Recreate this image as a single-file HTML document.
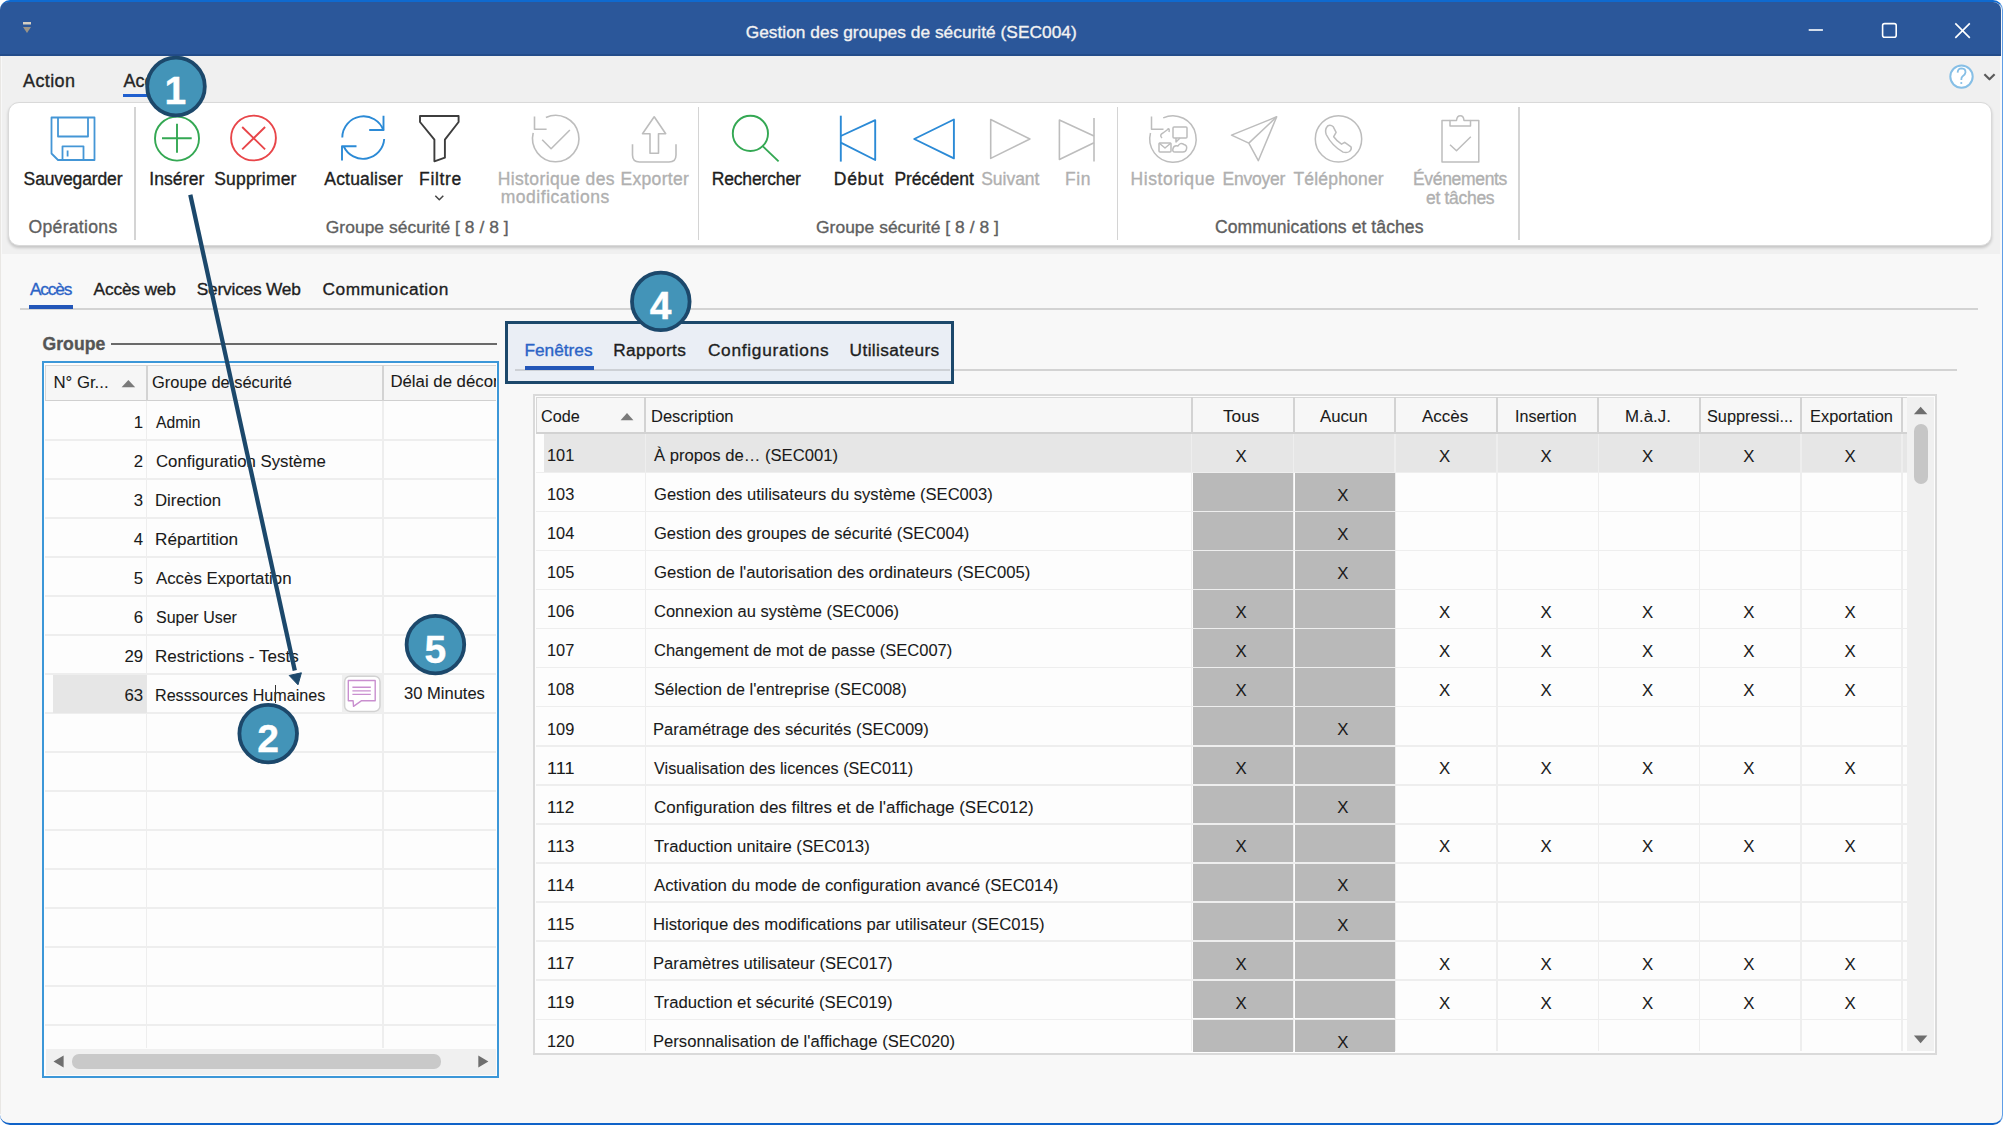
<!DOCTYPE html><html><head><meta charset="utf-8"><style>
html,body{margin:0;padding:0;width:2003px;height:1125px;overflow:hidden;background:#ffffff;}
body{font-family:'Liberation Sans', sans-serif;}
.t,.g{position:absolute;white-space:nowrap;line-height:1;}
.t{-webkit-text-stroke:0.35px currentColor;}
.g{-webkit-text-stroke:0.08px currentColor;}
.r{position:absolute;}
svg{position:absolute;left:0;top:0;}
</style></head><body>
<div class="r" style="left:0;top:0;width:2003px;height:1125px;background:#f8f8f8;border-top:2px solid #0f6ad0;border-right:1.5px solid #5f9ee6;border-bottom:2.6px solid #0f62c8;border-radius:10px;box-sizing:border-box;"></div>
<div class="r" style="left:0px;top:56px;width:1.3px;height:1058px;background:#e9e7e4;"></div>
<div class="r" style="left:0;top:2px;width:2001px;height:54px;background:#2b579a;border-radius:8px 8px 0 0;"></div>
<div class="r" style="left:0px;top:54px;width:2001px;height:2px;background:#234c8a;"></div>
<div class="t" style="left:745.70px;top:23.80px;font-size:17.3px;color:#f2f2f2;letter-spacing:0.040px;">Gestion des groupes de sécurité (SEC004)</div>
<div class="r" style="left:2px;top:56px;width:1998px;height:198px;background:#f0f0f0;"></div>
<div class="t" style="left:23.00px;top:72.00px;font-size:18px;color:#262626;letter-spacing:0.397px;">Action</div>
<div class="t" style="left:123.50px;top:72.00px;font-size:18px;color:#262626;">Accueil</div>
<div class="r" style="left:123px;top:94px;width:62px;height:3px;background:#1f5fcf;"></div>
<div class="r" style="left:8px;top:102px;width:1984px;height:144px;background:#ffffff;border:1px solid #d9d9d9;border-radius:11px;box-sizing:border-box;box-shadow:0 2px 3px rgba(0,0,0,0.18);"></div>
<div class="r" style="left:134.25px;top:107px;width:1.5px;height:133px;background:#d4d4d4;"></div>
<div class="r" style="left:697.95px;top:107px;width:1.5px;height:133px;background:#d4d4d4;"></div>
<div class="r" style="left:1116.75px;top:107px;width:1.5px;height:133px;background:#d4d4d4;"></div>
<div class="r" style="left:1518.05px;top:107px;width:1.5px;height:133px;background:#d4d4d4;"></div>
<div class="t" style="left:28.50px;top:219.14px;font-size:17.6px;color:#5f5f5f;letter-spacing:0.293px;">Opérations</div>
<div class="t" style="left:325.80px;top:219.31px;font-size:17.4px;color:#5f5f5f;letter-spacing:0.046px;">Groupe sécurité [ 8 / 8 ]</div>
<div class="t" style="left:816.00px;top:219.31px;font-size:17.4px;color:#5f5f5f;letter-spacing:0.046px;">Groupe sécurité [ 8 / 8 ]</div>
<div class="t" style="left:1214.90px;top:219.14px;font-size:17.6px;color:#5f5f5f;letter-spacing:0.056px;">Communications et tâches</div>
<div class="t" style="left:23.60px;top:170.53px;font-size:17.5px;color:#1e1e1e;letter-spacing:-0.128px;">Sauvegarder</div>
<div class="t" style="left:149.20px;top:170.53px;font-size:17.5px;color:#1e1e1e;letter-spacing:0.110px;">Insérer</div>
<div class="t" style="left:214.20px;top:170.53px;font-size:17.5px;color:#1e1e1e;letter-spacing:0.188px;">Supprimer</div>
<div class="t" style="left:324.30px;top:170.53px;font-size:17.5px;color:#1e1e1e;letter-spacing:0.188px;">Actualiser</div>
<div class="t" style="left:419.00px;top:170.53px;font-size:17.5px;color:#1e1e1e;letter-spacing:0.689px;">Filtre</div>
<div class="t" style="left:497.70px;top:170.53px;font-size:17.5px;color:#b0b0b0;letter-spacing:0.384px;">Historique des</div>
<div class="t" style="left:620.50px;top:170.53px;font-size:17.5px;color:#b0b0b0;letter-spacing:0.313px;">Exporter</div>
<div class="t" style="left:711.70px;top:170.53px;font-size:17.5px;color:#1e1e1e;letter-spacing:-0.148px;">Rechercher</div>
<div class="t" style="left:833.80px;top:170.53px;font-size:17.5px;color:#1e1e1e;letter-spacing:0.716px;">Début</div>
<div class="t" style="left:894.40px;top:170.53px;font-size:17.5px;color:#1e1e1e;letter-spacing:-0.039px;">Précédent</div>
<div class="t" style="left:981.20px;top:170.53px;font-size:17.5px;color:#b0b0b0;letter-spacing:-0.018px;">Suivant</div>
<div class="t" style="left:1064.90px;top:170.53px;font-size:17.5px;color:#b0b0b0;letter-spacing:0.661px;">Fin</div>
<div class="t" style="left:1130.40px;top:170.53px;font-size:17.5px;color:#b0b0b0;letter-spacing:0.628px;">Historique</div>
<div class="t" style="left:1222.50px;top:170.53px;font-size:17.5px;color:#b0b0b0;letter-spacing:-0.228px;">Envoyer</div>
<div class="t" style="left:1293.50px;top:170.53px;font-size:17.5px;color:#b0b0b0;letter-spacing:0.177px;">Téléphoner</div>
<div class="t" style="left:1413.00px;top:170.53px;font-size:17.5px;color:#b0b0b0;letter-spacing:-0.325px;">Événements</div>
<div class="t" style="left:500.70px;top:189.23px;font-size:17.5px;color:#b0b0b0;letter-spacing:0.535px;">modifications</div>
<div class="t" style="left:1426.00px;top:189.73px;font-size:17.5px;color:#b0b0b0;letter-spacing:-0.308px;">et tâches</div>
<div class="t" style="left:29.90px;top:281.40px;font-size:17.3px;color:#2b63c6;letter-spacing:-1.130px;">Accès</div>
<div class="t" style="left:93.60px;top:281.40px;font-size:17.3px;color:#1e1e1e;letter-spacing:-0.169px;">Accès web</div>
<div class="t" style="left:196.80px;top:281.40px;font-size:17.3px;color:#1e1e1e;letter-spacing:-0.207px;">Services Web</div>
<div class="t" style="left:322.60px;top:281.40px;font-size:17.3px;color:#1e1e1e;letter-spacing:0.471px;">Communication</div>
<div class="r" style="left:20px;top:307.5px;width:1957.8px;height:2px;background:#d3d3d3;"></div>
<div class="r" style="left:29.4px;top:305px;width:44px;height:4px;background:#2356b8;"></div>
<div class="t" style="left:42.40px;top:336.04px;font-size:17.6px;color:#555555;font-weight:bold;letter-spacing:0.085px;">Groupe</div>
<div class="r" style="left:111px;top:343.3px;width:386px;height:2px;background:#6a6a6a;"></div>
<div class="r" style="left:42px;top:361px;width:457px;height:717px;border:2px solid #3c97d8;box-sizing:border-box;background:#fdfdfd;"></div>
<div class="r" style="left:45px;top:365px;width:451px;height:36px;background:#f6f6f6;border:1px solid #d6d6d6;border-right:none;box-sizing:border-box;"></div>
<div class="r" style="left:45px;top:399.5px;width:451px;height:1.5px;background:#d0d0d0;"></div>
<div class="r" style="left:145.5px;top:365px;width:2px;height:36px;background:#d3d3d3;"></div>
<div class="r" style="left:381.5px;top:365px;width:2px;height:36px;background:#d3d3d3;"></div>
<div class="g" style="left:53.40px;top:375.22px;font-size:16.8px;color:#1a1a1a;">N° Gr...</div>
<div class="g" style="left:152.30px;top:375.22px;font-size:16.8px;color:#1a1a1a;transform:scaleX(0.9797);transform-origin:0 0;">Groupe de sécurité</div>
<div class="r" style="left:384px;top:365px;width:112px;height:34px;overflow:hidden;">
<div class="g" style="left:6.4px;top:8.7px;font-size:16.8px;color:#1a1a1a;">Délai de déconnexion</div>
</div>
<div class="r" style="left:45px;top:439px;width:451px;height:1.5px;background:#eeeeee;"></div>
<div class="r" style="left:45px;top:478px;width:451px;height:1.5px;background:#eeeeee;"></div>
<div class="r" style="left:45px;top:517px;width:451px;height:1.5px;background:#eeeeee;"></div>
<div class="r" style="left:45px;top:556px;width:451px;height:1.5px;background:#eeeeee;"></div>
<div class="r" style="left:45px;top:595px;width:451px;height:1.5px;background:#eeeeee;"></div>
<div class="r" style="left:45px;top:634px;width:451px;height:1.5px;background:#eeeeee;"></div>
<div class="r" style="left:45px;top:673px;width:451px;height:1.5px;background:#eeeeee;"></div>
<div class="r" style="left:45px;top:712px;width:451px;height:1.5px;background:#eeeeee;"></div>
<div class="r" style="left:45px;top:751px;width:451px;height:1.5px;background:#eeeeee;"></div>
<div class="r" style="left:45px;top:790px;width:451px;height:1.5px;background:#eeeeee;"></div>
<div class="r" style="left:45px;top:829px;width:451px;height:1.5px;background:#eeeeee;"></div>
<div class="r" style="left:45px;top:868px;width:451px;height:1.5px;background:#eeeeee;"></div>
<div class="r" style="left:45px;top:907px;width:451px;height:1.5px;background:#eeeeee;"></div>
<div class="r" style="left:45px;top:946px;width:451px;height:1.5px;background:#eeeeee;"></div>
<div class="r" style="left:45px;top:985px;width:451px;height:1.5px;background:#eeeeee;"></div>
<div class="r" style="left:45px;top:1024px;width:451px;height:1.5px;background:#eeeeee;"></div>
<div class="r" style="left:145.8px;top:401px;width:1.5px;height:647px;background:#eeeeee;"></div>
<div class="r" style="left:382.3px;top:401px;width:1.5px;height:647px;background:#eeeeee;"></div>
<div class="r" style="left:53px;top:675px;width:93.5px;height:37.5px;background:#e6e6e6;"></div>
<div class="r" style="left:342px;top:674.5px;width:40px;height:38px;background:#efefef;"></div>
<div class="g" style="left:133.80px;top:414.92px;font-size:16.8px;color:#1a1a1a;">1</div>
<div class="g" style="left:155.60px;top:414.92px;font-size:16.8px;color:#1a1a1a;transform:scaleX(0.9358);transform-origin:0 0;">Admin</div>
<div class="g" style="left:133.80px;top:453.92px;font-size:16.8px;color:#1a1a1a;">2</div>
<div class="g" style="left:155.60px;top:453.92px;font-size:16.8px;color:#1a1a1a;transform:scaleX(0.9998);transform-origin:0 0;">Configuration Système</div>
<div class="g" style="left:133.80px;top:492.92px;font-size:16.8px;color:#1a1a1a;">3</div>
<div class="g" style="left:154.60px;top:492.92px;font-size:16.8px;color:#1a1a1a;transform:scaleX(0.9987);transform-origin:0 0;">Direction</div>
<div class="g" style="left:133.80px;top:531.92px;font-size:16.8px;color:#1a1a1a;">4</div>
<div class="g" style="left:154.58px;top:531.92px;font-size:16.8px;color:#1a1a1a;transform:scaleX(1.0248);transform-origin:0 0;">Répartition</div>
<div class="g" style="left:133.80px;top:570.92px;font-size:16.8px;color:#1a1a1a;">5</div>
<div class="g" style="left:155.60px;top:570.92px;font-size:16.8px;color:#1a1a1a;transform:scaleX(1.0021);transform-origin:0 0;">Accès Exportation</div>
<div class="g" style="left:133.80px;top:609.92px;font-size:16.8px;color:#1a1a1a;">6</div>
<div class="g" style="left:155.60px;top:609.92px;font-size:16.8px;color:#1a1a1a;transform:scaleX(0.9533);transform-origin:0 0;">Super User</div>
<div class="g" style="left:124.47px;top:648.92px;font-size:16.8px;color:#1a1a1a;">29</div>
<div class="g" style="left:154.58px;top:648.92px;font-size:16.8px;color:#1a1a1a;transform:scaleX(1.0160);transform-origin:0 0;">Restrictions - Tests</div>
<div class="g" style="left:124.47px;top:687.92px;font-size:16.8px;color:#1a1a1a;">63</div>
<div class="g" style="left:154.64px;top:687.92px;font-size:16.8px;color:#1a1a1a;transform:scaleX(0.9607);transform-origin:0 0;">Resssources Humaines</div>
<div class="g" style="left:403.70px;top:686.32px;font-size:16.8px;color:#1a1a1a;transform:scaleX(0.9854);transform-origin:0 0;">30 Minutes</div>
<div class="r" style="left:275px;top:685px;width:1.2px;height:18px;background:#333;"></div>
<div class="r" style="left:46px;top:1048.5px;width:450px;height:26px;background:#f0f0f0;"></div>
<div class="r" style="left:71.7px;top:1054.3px;width:369px;height:14.5px;background:#c9c9c9;border-radius:7px;"></div>
<div class="r" style="left:515px;top:368.5px;width:1442px;height:2px;background:#d3d3d3;"></div>
<div class="r" style="left:505px;top:321px;width:449px;height:63px;border:3px solid #1c486b;box-sizing:border-box;background:#eaeef5;"></div>
<div class="r" style="left:515px;top:368.5px;width:435px;height:2px;background:#cdd0d5;"></div>
<div class="t" style="left:524.40px;top:342.30px;font-size:17.3px;color:#2b63c6;">Fenêtres</div>
<div class="t" style="left:613.20px;top:342.30px;font-size:17.3px;color:#1e1e1e;letter-spacing:0.360px;">Rapports</div>
<div class="t" style="left:707.90px;top:342.30px;font-size:17.3px;color:#1e1e1e;letter-spacing:0.716px;">Configurations</div>
<div class="t" style="left:849.60px;top:342.30px;font-size:17.3px;color:#1e1e1e;letter-spacing:0.379px;">Utilisateurs</div>
<div class="r" style="left:524.6px;top:365.5px;width:69px;height:4.3px;background:#2356b8;"></div>
<div class="r" style="left:532.5px;top:393.5px;width:1404px;height:661px;border:2px solid #dadada;box-sizing:border-box;background:#fdfdfd;"></div>
<div class="r" style="left:536px;top:397px;width:1371px;height:36.5px;background:#f7f7f7;border:1px solid #d8d8d8;border-right:none;box-sizing:border-box;"></div>
<div class="r" style="left:536px;top:432px;width:1371px;height:1.5px;background:#d2d2d2;"></div>
<div class="r" style="left:644.4px;top:397px;width:2px;height:36px;background:#d3d3d3;"></div>
<div class="r" style="left:1190.5px;top:397px;width:2px;height:36px;background:#d3d3d3;"></div>
<div class="r" style="left:1292.6px;top:397px;width:2px;height:36px;background:#d3d3d3;"></div>
<div class="r" style="left:1393.9px;top:397px;width:2px;height:36px;background:#d3d3d3;"></div>
<div class="r" style="left:1495.9px;top:397px;width:2px;height:36px;background:#d3d3d3;"></div>
<div class="r" style="left:1597.3px;top:397px;width:2px;height:36px;background:#d3d3d3;"></div>
<div class="r" style="left:1698.5px;top:397px;width:2px;height:36px;background:#d3d3d3;"></div>
<div class="r" style="left:1800px;top:397px;width:2px;height:36px;background:#d3d3d3;"></div>
<div class="r" style="left:1901px;top:397px;width:2px;height:36px;background:#d3d3d3;"></div>
<div class="g" style="left:541.40px;top:408.72px;font-size:16.8px;color:#1a1a1a;transform:scaleX(0.9652);transform-origin:0 0;">Code</div>
<div class="g" style="left:650.72px;top:408.72px;font-size:16.8px;color:#1a1a1a;transform:scaleX(0.9830);transform-origin:0 0;">Description</div>
<div class="g" style="left:1223.10px;top:408.72px;font-size:16.8px;color:#1a1a1a;transform:scaleX(1.0269);transform-origin:0 0;">Tous</div>
<div class="g" style="left:1319.80px;top:408.72px;font-size:16.8px;color:#1a1a1a;transform:scaleX(0.9968);transform-origin:0 0;">Aucun</div>
<div class="g" style="left:1421.60px;top:408.72px;font-size:16.8px;color:#1a1a1a;transform:scaleX(1.0109);transform-origin:0 0;">Accès</div>
<div class="g" style="left:1514.84px;top:408.72px;font-size:16.8px;color:#1a1a1a;transform:scaleX(0.9567);transform-origin:0 0;">Insertion</div>
<div class="g" style="left:1625.10px;top:408.72px;font-size:16.8px;color:#1a1a1a;transform:scaleX(1.0039);transform-origin:0 0;">M.à.J.</div>
<div class="g" style="left:1707.20px;top:408.72px;font-size:16.8px;color:#1a1a1a;transform:scaleX(0.9710);transform-origin:0 0;">Suppressi...</div>
<div class="g" style="left:1809.62px;top:408.72px;font-size:16.8px;color:#1a1a1a;transform:scaleX(0.9766);transform-origin:0 0;">Exportation</div>
<div class="r" style="left:534px;top:433.5px;width:1373px;height:618px;overflow:hidden;">
<div class="r" style="left:9.6px;top:0.0px;width:1363px;height:38.5px;background:#e6e6e6;"></div>
<div class="r" style="left:2px;top:38.07px;width:1371px;height:1.5px;background:#eeeeee;"></div>
<div class="r" style="left:2px;top:77.14px;width:1371px;height:1.5px;background:#eeeeee;"></div>
<div class="r" style="left:2px;top:116.21px;width:1371px;height:1.5px;background:#eeeeee;"></div>
<div class="r" style="left:2px;top:155.28px;width:1371px;height:1.5px;background:#eeeeee;"></div>
<div class="r" style="left:2px;top:194.35px;width:1371px;height:1.5px;background:#eeeeee;"></div>
<div class="r" style="left:2px;top:233.42px;width:1371px;height:1.5px;background:#eeeeee;"></div>
<div class="r" style="left:2px;top:272.49px;width:1371px;height:1.5px;background:#eeeeee;"></div>
<div class="r" style="left:2px;top:311.56px;width:1371px;height:1.5px;background:#eeeeee;"></div>
<div class="r" style="left:2px;top:350.63px;width:1371px;height:1.5px;background:#eeeeee;"></div>
<div class="r" style="left:2px;top:389.7px;width:1371px;height:1.5px;background:#eeeeee;"></div>
<div class="r" style="left:2px;top:428.77px;width:1371px;height:1.5px;background:#eeeeee;"></div>
<div class="r" style="left:2px;top:467.84px;width:1371px;height:1.5px;background:#eeeeee;"></div>
<div class="r" style="left:2px;top:506.91px;width:1371px;height:1.5px;background:#eeeeee;"></div>
<div class="r" style="left:2px;top:545.98px;width:1371px;height:1.5px;background:#eeeeee;"></div>
<div class="r" style="left:2px;top:585.05px;width:1371px;height:1.5px;background:#eeeeee;"></div>
<div class="r" style="left:110.65px;top:-0.5px;width:1.5px;height:618px;background:#eeeeee;"></div>
<div class="r" style="left:656.75px;top:-0.5px;width:1.5px;height:618px;background:#eeeeee;"></div>
<div class="r" style="left:758.85px;top:-0.5px;width:1.5px;height:618px;background:#eeeeee;"></div>
<div class="r" style="left:860.15px;top:-0.5px;width:1.5px;height:618px;background:#eeeeee;"></div>
<div class="r" style="left:962.15px;top:-0.5px;width:1.5px;height:618px;background:#eeeeee;"></div>
<div class="r" style="left:1063.55px;top:-0.5px;width:1.5px;height:618px;background:#eeeeee;"></div>
<div class="r" style="left:1164.75px;top:-0.5px;width:1.5px;height:618px;background:#eeeeee;"></div>
<div class="r" style="left:1266.25px;top:-0.5px;width:1.5px;height:618px;background:#eeeeee;"></div>
<div class="r" style="left:1367.25px;top:-0.5px;width:1.5px;height:618px;background:#eeeeee;"></div>
<div class="g" style="left:12.92px;top:14.52px;font-size:16.8px;color:#1a1a1a;transform:scaleX(0.9750);transform-origin:0 0;">101</div>
<div class="g" style="left:119.80px;top:14.52px;font-size:16.8px;color:#1a1a1a;transform:scaleX(0.9912);transform-origin:0 0;">À propos de… (SEC001)</div>
<div class="g" style="left:701.55px;top:15.22px;font-size:16.8px;color:#1a1a1a;">X</div>
<div class="g" style="left:904.90px;top:15.22px;font-size:16.8px;color:#1a1a1a;">X</div>
<div class="g" style="left:1006.60px;top:15.22px;font-size:16.8px;color:#1a1a1a;">X</div>
<div class="g" style="left:1107.90px;top:15.22px;font-size:16.8px;color:#1a1a1a;">X</div>
<div class="g" style="left:1209.25px;top:15.22px;font-size:16.8px;color:#1a1a1a;">X</div>
<div class="g" style="left:1310.50px;top:15.22px;font-size:16.8px;color:#1a1a1a;">X</div>
<div class="r" style="left:659.2px;top:39.57px;width:99.5px;height:37.5px;background:#b9b9b9;"></div>
<div class="r" style="left:761.2px;top:39.57px;width:99.7px;height:37.5px;background:#b9b9b9;"></div>
<div class="g" style="left:12.92px;top:53.59px;font-size:16.8px;color:#1a1a1a;transform:scaleX(0.9750);transform-origin:0 0;">103</div>
<div class="g" style="left:119.80px;top:53.59px;font-size:16.8px;color:#1a1a1a;transform:scaleX(0.9870);transform-origin:0 0;">Gestion des utilisateurs du système (SEC003)</div>
<div class="g" style="left:803.25px;top:54.29px;font-size:16.8px;color:#1a1a1a;">X</div>
<div class="r" style="left:659.2px;top:78.64px;width:99.5px;height:37.5px;background:#b9b9b9;"></div>
<div class="r" style="left:761.2px;top:78.64px;width:99.7px;height:37.5px;background:#b9b9b9;"></div>
<div class="g" style="left:12.92px;top:92.66px;font-size:16.8px;color:#1a1a1a;transform:scaleX(0.9750);transform-origin:0 0;">104</div>
<div class="g" style="left:119.80px;top:92.66px;font-size:16.8px;color:#1a1a1a;transform:scaleX(0.9857);transform-origin:0 0;">Gestion des groupes de sécurité (SEC004)</div>
<div class="g" style="left:803.25px;top:93.36px;font-size:16.8px;color:#1a1a1a;">X</div>
<div class="r" style="left:659.2px;top:117.71px;width:99.5px;height:37.5px;background:#b9b9b9;"></div>
<div class="r" style="left:761.2px;top:117.71px;width:99.7px;height:37.5px;background:#b9b9b9;"></div>
<div class="g" style="left:12.92px;top:131.73px;font-size:16.8px;color:#1a1a1a;transform:scaleX(0.9750);transform-origin:0 0;">105</div>
<div class="g" style="left:119.80px;top:131.73px;font-size:16.8px;color:#1a1a1a;transform:scaleX(0.9950);transform-origin:0 0;">Gestion de l&#x27;autorisation des ordinateurs (SEC005)</div>
<div class="g" style="left:803.25px;top:132.43px;font-size:16.8px;color:#1a1a1a;">X</div>
<div class="r" style="left:659.2px;top:156.78px;width:99.5px;height:37.5px;background:#b9b9b9;"></div>
<div class="r" style="left:761.2px;top:156.78px;width:99.7px;height:37.5px;background:#b9b9b9;"></div>
<div class="g" style="left:12.92px;top:170.80px;font-size:16.8px;color:#1a1a1a;transform:scaleX(0.9750);transform-origin:0 0;">106</div>
<div class="g" style="left:119.80px;top:170.80px;font-size:16.8px;color:#1a1a1a;transform:scaleX(0.9841);transform-origin:0 0;">Connexion au système (SEC006)</div>
<div class="g" style="left:701.55px;top:171.50px;font-size:16.8px;color:#1a1a1a;">X</div>
<div class="g" style="left:904.90px;top:171.50px;font-size:16.8px;color:#1a1a1a;">X</div>
<div class="g" style="left:1006.60px;top:171.50px;font-size:16.8px;color:#1a1a1a;">X</div>
<div class="g" style="left:1107.90px;top:171.50px;font-size:16.8px;color:#1a1a1a;">X</div>
<div class="g" style="left:1209.25px;top:171.50px;font-size:16.8px;color:#1a1a1a;">X</div>
<div class="g" style="left:1310.50px;top:171.50px;font-size:16.8px;color:#1a1a1a;">X</div>
<div class="r" style="left:659.2px;top:195.85px;width:99.5px;height:37.5px;background:#b9b9b9;"></div>
<div class="r" style="left:761.2px;top:195.85px;width:99.7px;height:37.5px;background:#b9b9b9;"></div>
<div class="g" style="left:12.92px;top:209.87px;font-size:16.8px;color:#1a1a1a;transform:scaleX(0.9750);transform-origin:0 0;">107</div>
<div class="g" style="left:119.80px;top:209.87px;font-size:16.8px;color:#1a1a1a;transform:scaleX(0.9839);transform-origin:0 0;">Changement de mot de passe (SEC007)</div>
<div class="g" style="left:701.55px;top:210.57px;font-size:16.8px;color:#1a1a1a;">X</div>
<div class="g" style="left:904.90px;top:210.57px;font-size:16.8px;color:#1a1a1a;">X</div>
<div class="g" style="left:1006.60px;top:210.57px;font-size:16.8px;color:#1a1a1a;">X</div>
<div class="g" style="left:1107.90px;top:210.57px;font-size:16.8px;color:#1a1a1a;">X</div>
<div class="g" style="left:1209.25px;top:210.57px;font-size:16.8px;color:#1a1a1a;">X</div>
<div class="g" style="left:1310.50px;top:210.57px;font-size:16.8px;color:#1a1a1a;">X</div>
<div class="r" style="left:659.2px;top:234.92px;width:99.5px;height:37.5px;background:#b9b9b9;"></div>
<div class="r" style="left:761.2px;top:234.92px;width:99.7px;height:37.5px;background:#b9b9b9;"></div>
<div class="g" style="left:12.92px;top:248.94px;font-size:16.8px;color:#1a1a1a;transform:scaleX(0.9750);transform-origin:0 0;">108</div>
<div class="g" style="left:119.80px;top:248.94px;font-size:16.8px;color:#1a1a1a;transform:scaleX(0.9839);transform-origin:0 0;">Sélection de l&#x27;entreprise (SEC008)</div>
<div class="g" style="left:701.55px;top:249.64px;font-size:16.8px;color:#1a1a1a;">X</div>
<div class="g" style="left:904.90px;top:249.64px;font-size:16.8px;color:#1a1a1a;">X</div>
<div class="g" style="left:1006.60px;top:249.64px;font-size:16.8px;color:#1a1a1a;">X</div>
<div class="g" style="left:1107.90px;top:249.64px;font-size:16.8px;color:#1a1a1a;">X</div>
<div class="g" style="left:1209.25px;top:249.64px;font-size:16.8px;color:#1a1a1a;">X</div>
<div class="g" style="left:1310.50px;top:249.64px;font-size:16.8px;color:#1a1a1a;">X</div>
<div class="r" style="left:659.2px;top:273.99px;width:99.5px;height:37.5px;background:#b9b9b9;"></div>
<div class="r" style="left:761.2px;top:273.99px;width:99.7px;height:37.5px;background:#b9b9b9;"></div>
<div class="g" style="left:12.92px;top:288.01px;font-size:16.8px;color:#1a1a1a;transform:scaleX(0.9750);transform-origin:0 0;">109</div>
<div class="g" style="left:118.81px;top:288.01px;font-size:16.8px;color:#1a1a1a;transform:scaleX(0.9892);transform-origin:0 0;">Paramétrage des sécurités (SEC009)</div>
<div class="g" style="left:803.25px;top:288.71px;font-size:16.8px;color:#1a1a1a;">X</div>
<div class="r" style="left:659.2px;top:313.06px;width:99.5px;height:37.5px;background:#b9b9b9;"></div>
<div class="r" style="left:761.2px;top:313.06px;width:99.7px;height:37.5px;background:#b9b9b9;"></div>
<div class="g" style="left:12.82px;top:327.08px;font-size:16.8px;color:#1a1a1a;transform:scaleX(1.0756);transform-origin:0 0;">111</div>
<div class="g" style="left:119.80px;top:327.08px;font-size:16.8px;color:#1a1a1a;transform:scaleX(0.9670);transform-origin:0 0;">Visualisation des licences (SEC011)</div>
<div class="g" style="left:701.55px;top:327.78px;font-size:16.8px;color:#1a1a1a;">X</div>
<div class="g" style="left:904.90px;top:327.78px;font-size:16.8px;color:#1a1a1a;">X</div>
<div class="g" style="left:1006.60px;top:327.78px;font-size:16.8px;color:#1a1a1a;">X</div>
<div class="g" style="left:1107.90px;top:327.78px;font-size:16.8px;color:#1a1a1a;">X</div>
<div class="g" style="left:1209.25px;top:327.78px;font-size:16.8px;color:#1a1a1a;">X</div>
<div class="g" style="left:1310.50px;top:327.78px;font-size:16.8px;color:#1a1a1a;">X</div>
<div class="r" style="left:659.2px;top:352.13px;width:99.5px;height:37.5px;background:#b9b9b9;"></div>
<div class="r" style="left:761.2px;top:352.13px;width:99.7px;height:37.5px;background:#b9b9b9;"></div>
<div class="g" style="left:12.88px;top:366.15px;font-size:16.8px;color:#1a1a1a;transform:scaleX(1.0228);transform-origin:0 0;">112</div>
<div class="g" style="left:119.80px;top:366.15px;font-size:16.8px;color:#1a1a1a;transform:scaleX(1.0095);transform-origin:0 0;">Configuration des filtres et de l&#x27;affichage (SEC012)</div>
<div class="g" style="left:803.25px;top:366.85px;font-size:16.8px;color:#1a1a1a;">X</div>
<div class="r" style="left:659.2px;top:391.2px;width:99.5px;height:37.5px;background:#b9b9b9;"></div>
<div class="r" style="left:761.2px;top:391.2px;width:99.7px;height:37.5px;background:#b9b9b9;"></div>
<div class="g" style="left:12.88px;top:405.22px;font-size:16.8px;color:#1a1a1a;transform:scaleX(1.0228);transform-origin:0 0;">113</div>
<div class="g" style="left:119.80px;top:405.22px;font-size:16.8px;color:#1a1a1a;transform:scaleX(0.9953);transform-origin:0 0;">Traduction unitaire (SEC013)</div>
<div class="g" style="left:701.55px;top:405.92px;font-size:16.8px;color:#1a1a1a;">X</div>
<div class="g" style="left:904.90px;top:405.92px;font-size:16.8px;color:#1a1a1a;">X</div>
<div class="g" style="left:1006.60px;top:405.92px;font-size:16.8px;color:#1a1a1a;">X</div>
<div class="g" style="left:1107.90px;top:405.92px;font-size:16.8px;color:#1a1a1a;">X</div>
<div class="g" style="left:1209.25px;top:405.92px;font-size:16.8px;color:#1a1a1a;">X</div>
<div class="g" style="left:1310.50px;top:405.92px;font-size:16.8px;color:#1a1a1a;">X</div>
<div class="r" style="left:659.2px;top:430.27px;width:99.5px;height:37.5px;background:#b9b9b9;"></div>
<div class="r" style="left:761.2px;top:430.27px;width:99.7px;height:37.5px;background:#b9b9b9;"></div>
<div class="g" style="left:12.88px;top:444.29px;font-size:16.8px;color:#1a1a1a;transform:scaleX(1.0228);transform-origin:0 0;">114</div>
<div class="g" style="left:119.80px;top:444.29px;font-size:16.8px;color:#1a1a1a;transform:scaleX(1.0012);transform-origin:0 0;">Activation du mode de configuration avancé (SEC014)</div>
<div class="g" style="left:803.25px;top:444.99px;font-size:16.8px;color:#1a1a1a;">X</div>
<div class="r" style="left:659.2px;top:469.34px;width:99.5px;height:37.5px;background:#b9b9b9;"></div>
<div class="r" style="left:761.2px;top:469.34px;width:99.7px;height:37.5px;background:#b9b9b9;"></div>
<div class="g" style="left:12.88px;top:483.36px;font-size:16.8px;color:#1a1a1a;transform:scaleX(1.0228);transform-origin:0 0;">115</div>
<div class="g" style="left:118.81px;top:483.36px;font-size:16.8px;color:#1a1a1a;transform:scaleX(0.9949);transform-origin:0 0;">Historique des modifications par utilisateur (SEC015)</div>
<div class="g" style="left:803.25px;top:484.06px;font-size:16.8px;color:#1a1a1a;">X</div>
<div class="r" style="left:659.2px;top:508.41px;width:99.5px;height:37.5px;background:#b9b9b9;"></div>
<div class="r" style="left:761.2px;top:508.41px;width:99.7px;height:37.5px;background:#b9b9b9;"></div>
<div class="g" style="left:12.88px;top:522.43px;font-size:16.8px;color:#1a1a1a;transform:scaleX(1.0228);transform-origin:0 0;">117</div>
<div class="g" style="left:118.81px;top:522.43px;font-size:16.8px;color:#1a1a1a;transform:scaleX(0.9914);transform-origin:0 0;">Paramètres utilisateur (SEC017)</div>
<div class="g" style="left:701.55px;top:523.13px;font-size:16.8px;color:#1a1a1a;">X</div>
<div class="g" style="left:904.90px;top:523.13px;font-size:16.8px;color:#1a1a1a;">X</div>
<div class="g" style="left:1006.60px;top:523.13px;font-size:16.8px;color:#1a1a1a;">X</div>
<div class="g" style="left:1107.90px;top:523.13px;font-size:16.8px;color:#1a1a1a;">X</div>
<div class="g" style="left:1209.25px;top:523.13px;font-size:16.8px;color:#1a1a1a;">X</div>
<div class="g" style="left:1310.50px;top:523.13px;font-size:16.8px;color:#1a1a1a;">X</div>
<div class="r" style="left:659.2px;top:547.48px;width:99.5px;height:37.5px;background:#b9b9b9;"></div>
<div class="r" style="left:761.2px;top:547.48px;width:99.7px;height:37.5px;background:#b9b9b9;"></div>
<div class="g" style="left:12.88px;top:561.50px;font-size:16.8px;color:#1a1a1a;transform:scaleX(1.0228);transform-origin:0 0;">119</div>
<div class="g" style="left:119.80px;top:561.50px;font-size:16.8px;color:#1a1a1a;transform:scaleX(0.9975);transform-origin:0 0;">Traduction et sécurité (SEC019)</div>
<div class="g" style="left:701.55px;top:562.20px;font-size:16.8px;color:#1a1a1a;">X</div>
<div class="g" style="left:904.90px;top:562.20px;font-size:16.8px;color:#1a1a1a;">X</div>
<div class="g" style="left:1006.60px;top:562.20px;font-size:16.8px;color:#1a1a1a;">X</div>
<div class="g" style="left:1107.90px;top:562.20px;font-size:16.8px;color:#1a1a1a;">X</div>
<div class="g" style="left:1209.25px;top:562.20px;font-size:16.8px;color:#1a1a1a;">X</div>
<div class="g" style="left:1310.50px;top:562.20px;font-size:16.8px;color:#1a1a1a;">X</div>
<div class="r" style="left:659.2px;top:586.55px;width:99.5px;height:37.5px;background:#b9b9b9;"></div>
<div class="r" style="left:761.2px;top:586.55px;width:99.7px;height:37.5px;background:#b9b9b9;"></div>
<div class="g" style="left:12.92px;top:600.57px;font-size:16.8px;color:#1a1a1a;transform:scaleX(0.9750);transform-origin:0 0;">120</div>
<div class="g" style="left:118.81px;top:600.57px;font-size:16.8px;color:#1a1a1a;transform:scaleX(0.9899);transform-origin:0 0;">Personnalisation de l&#x27;affichage (SEC020)</div>
<div class="g" style="left:803.25px;top:601.27px;font-size:16.8px;color:#1a1a1a;">X</div>
</div>
<div class="r" style="left:1907px;top:397px;width:27px;height:654px;background:#f0f0f0;"></div>
<div class="r" style="left:1913.5px;top:423.6px;width:14px;height:60.2px;background:#c6c6c6;border-radius:7px;"></div>
<svg width="2003" height="1125" viewBox="0 0 2003 1125" fill="none" stroke-linejoin="round">
<rect x="23" y="22" width="8" height="2.5" fill="#d6cfc2"/><path d="M23 27 L31 27 L27 33 Z" fill="#9a9488"/>
<g stroke="#ffffff" stroke-width="1.6"><path d="M1808.7 30 H1822.9"/><rect x="1882.6" y="23.6" width="13.6" height="13.6" rx="2"/><path d="M1955.3 23.4 L1969.8 37.9 M1969.8 23.4 L1955.3 37.9"/></g>
<circle cx="1961.5" cy="76.6" r="11.2" fill="#ffffff" stroke="#86bfe6" stroke-width="2"/>
<path d="M1957.6 72.6 Q1957.8 68.3 1961.7 68.3 Q1965.6 68.5 1965.5 72.3 Q1965.3 74.6 1962.4 76.5 Q1961.3 77.3 1961.3 80" stroke="#86bfe6" stroke-width="1.8"/><circle cx="1961.3" cy="83" r="1.1" fill="#86bfe6"/>
<path d="M1984.4 74.3 L1989.5 79.3 L1994.6 74.3" stroke="#5a5a5a" stroke-width="2.2"/>
<g stroke="#4496d6" stroke-width="1.8" stroke-linejoin="round"><path d="M51.5 117.5 H94.5 V160 H58 L51.5 153.5 Z"/><path d="M58 117.5 V136.5 H88 V117.5"/><path d="M62.5 160 V146.3 H83.5 V160"/><path d="M67.6 150.5 V156.5"/></g>
<g stroke="#34a853" stroke-width="1.9"><circle cx="177" cy="138.6" r="22"/><path d="M162 138.3 H191.7 M177 123.8 V152.8"/></g>
<g stroke="#e84549" stroke-width="1.9"><circle cx="253.5" cy="138" r="22.4"/><path d="M242.2 127 L265.1 149.4 M265.1 127 L242.2 149.4"/></g>
<g stroke="#2b8ad6" stroke-width="1.9"><path d="M342.3 137.4 A21.2 21.2 0 0 1 383.5 130.5"/><path d="M383.5 115.7 V130 H369.2"/><path d="M384.2 139 A21.2 21.2 0 0 1 343.8 146.5"/><path d="M342 160.6 V146.3 H356.5"/></g>
<path d="M420 116 H458.6 V122 L444.9 139.7 V157.7 L434.4 161.3 V139.7 L420 122 Z" stroke="#3d3d3d" stroke-width="1.9"/>
<path d="M435.3 195.7 L439.3 199.7 L443.3 195.7" stroke="#444" stroke-width="1.5"/>
<g stroke="#bdbdbd" stroke-width="1.6"><path d="M533.2 132.9 A23.2 23.2 0 1 0 545.9 117.5"/><path d="M534.5 116.5 V129.2 H546.6"/><path d="M542.2 139.7 L551.1 148.7 L569.9 130"/></g>
<g stroke="#bdbdbd" stroke-width="1.6"><path d="M654.2 116.8 L665.7 133.7 H658.5 V153.2 H650 V133.7 H642.5 Z"/><path d="M632.5 144.2 V155 Q632.5 162 639.5 162 H669 Q676 162 676 155 V144.2"/></g>
<g stroke="#34a853" stroke-width="1.9"><circle cx="750.4" cy="133.4" r="17.6"/><path d="M762.9 146.4 L778.6 161.4"/></g>
<g stroke="#2b8ad6" stroke-width="1.9"><path d="M840.8 115.7 V161.6"/><path d="M840.8 136 L875.2 120.2 V160 L840.8 142.7"/></g>
<path d="M914.2 139 L953.9 119.5 V158.4 Z" stroke="#2b8ad6" stroke-width="1.9"/>
<path d="M990.7 119.5 L1029.9 139 L990.7 158.4 Z" stroke="#bdbdbd" stroke-width="1.6"/>
<g stroke="#bdbdbd" stroke-width="1.6"><path d="M1094 118 V161.4"/><path d="M1094 136 L1059.4 120 V159.5 L1094 142.7"/></g>
<g stroke="#bdbdbd" stroke-width="1.5"><path d="M1150.5 133 A23.2 23.2 0 1 0 1163.2 117.9"/><path d="M1151.5 116.5 V129.2 H1163.5"/><rect x="1173" y="127" width="14" height="11" rx="1"/><path d="M1176 138 L1176 142 L1180 138"/><rect x="1159" y="143" width="12" height="9" rx="1"/><path d="M1159 143 L1165 148 L1171 143"/><path d="M1175 152 Q1172 152 1173 148.5 Q1174 145 1178 146 Q1180 142 1184 144.5 Q1187.5 145.5 1186.5 149 Q1186 152 1183 152 Z"/><path d="M1162 138 Q1159 135 1163 133 L1167 130 Q1170 127 1169 132"/></g>
<g stroke="#bdbdbd" stroke-width="1.5"><path d="M1231.5 135.1 L1276.7 116.8 L1258.3 160.7 L1248.8 143.1 Z"/><path d="M1248.8 143.1 L1276.7 116.8"/></g>
<g stroke="#bdbdbd" stroke-width="1.5"><circle cx="1338.5" cy="138.9" r="23.2"/><path d="M1327.6 126 Q1330.5 124.2 1333.3 126.8 L1336.1 132.4 L1333.7 136.7 Q1336.8 141 1341.5 144.2 L1344.7 142.3 L1351 146.8 Q1352 149.5 1349.5 151.5 Q1347 153.2 1343.1 152.1 Q1332 146 1326.2 134.5 Q1324.5 129.5 1327.6 126 Z" stroke-linejoin="round"/></g>
<g stroke="#bdbdbd" stroke-width="1.5"><path d="M1450 120.5 H1442 V162 H1478.8 V120.5 H1470.5"/><path d="M1450 126 V120.5 H1456.5 Q1457 115.7 1460.3 115.7 Q1463.6 115.7 1464 120.5 H1470.5 V126 Z"/><path d="M1450 144.7 L1456.5 150.8 L1470.8 136.7"/></g>
<path d="M121.6 387.2 L128.4 380 L135.2 387.2 Z" fill="#7a7a7a"/>
<path d="M620.6 420.2 L627 413 L633.4 420.2 Z" fill="#7a7a7a"/>
<path d="M53.5 1061.5 L63.6 1055.5 V1067.5 Z" fill="#6e6e6e"/><path d="M488.4 1061.5 L478.3 1055.5 V1067.5 Z" fill="#6e6e6e"/>
<path d="M1913.9 414.2 L1920.6 406.7 L1927.4 414.2 Z" fill="#6e6e6e"/><path d="M1913.9 1035.6 L1920.6 1043.3 L1927.4 1035.6 Z" fill="#6e6e6e"/>
<rect x="344.6" y="676.2" width="35.4" height="35.2" rx="5.5" fill="#ffffff" stroke="#d2d2d2" stroke-width="1.5"/>
<g stroke="#c98fcf" stroke-width="1.4"><path d="M348.3 680.5 H375.2 V700.7 H361.6 L353.5 706.3 L353.1 700.7 H348.3 Z" stroke-linejoin="round"/><path d="M352.4 687.2 H370.8 M352.4 690.9 H370.8 M352.4 694.4 H370.8"/></g>
<path d="M190.3 194.7 L294.8 670.5" stroke="#1c486b" stroke-width="4.3" stroke-linecap="butt"/>
<path d="M298 684.8 L289.2 675.5 L301.4 672.8 Z" fill="#1c486b" stroke="#1c486b" stroke-width="1"/>
<circle cx="176" cy="86.5" r="28.8" fill="#4394b8" stroke="#1c486b" stroke-width="3.8"/>
<circle cx="660.8" cy="301.4" r="28.8" fill="#4394b8" stroke="#1c486b" stroke-width="3.8"/>
<circle cx="435.4" cy="644.6" r="28.8" fill="#4394b8" stroke="#1c486b" stroke-width="3.8"/>
<circle cx="268.2" cy="733.6" r="28.8" fill="#4394b8" stroke="#1c486b" stroke-width="3.8"/>
</svg>
<div class="t" style="left:164.50px;top:71.45px;font-size:39px;color:#ffffff;font-weight:bold;">1</div>
<div class="t" style="left:649.80px;top:286.35px;font-size:39px;color:#ffffff;font-weight:bold;">4</div>
<div class="t" style="left:424.40px;top:629.55px;font-size:39px;color:#ffffff;font-weight:bold;">5</div>
<div class="t" style="left:257.20px;top:718.55px;font-size:39px;color:#ffffff;font-weight:bold;">2</div>
</body></html>
